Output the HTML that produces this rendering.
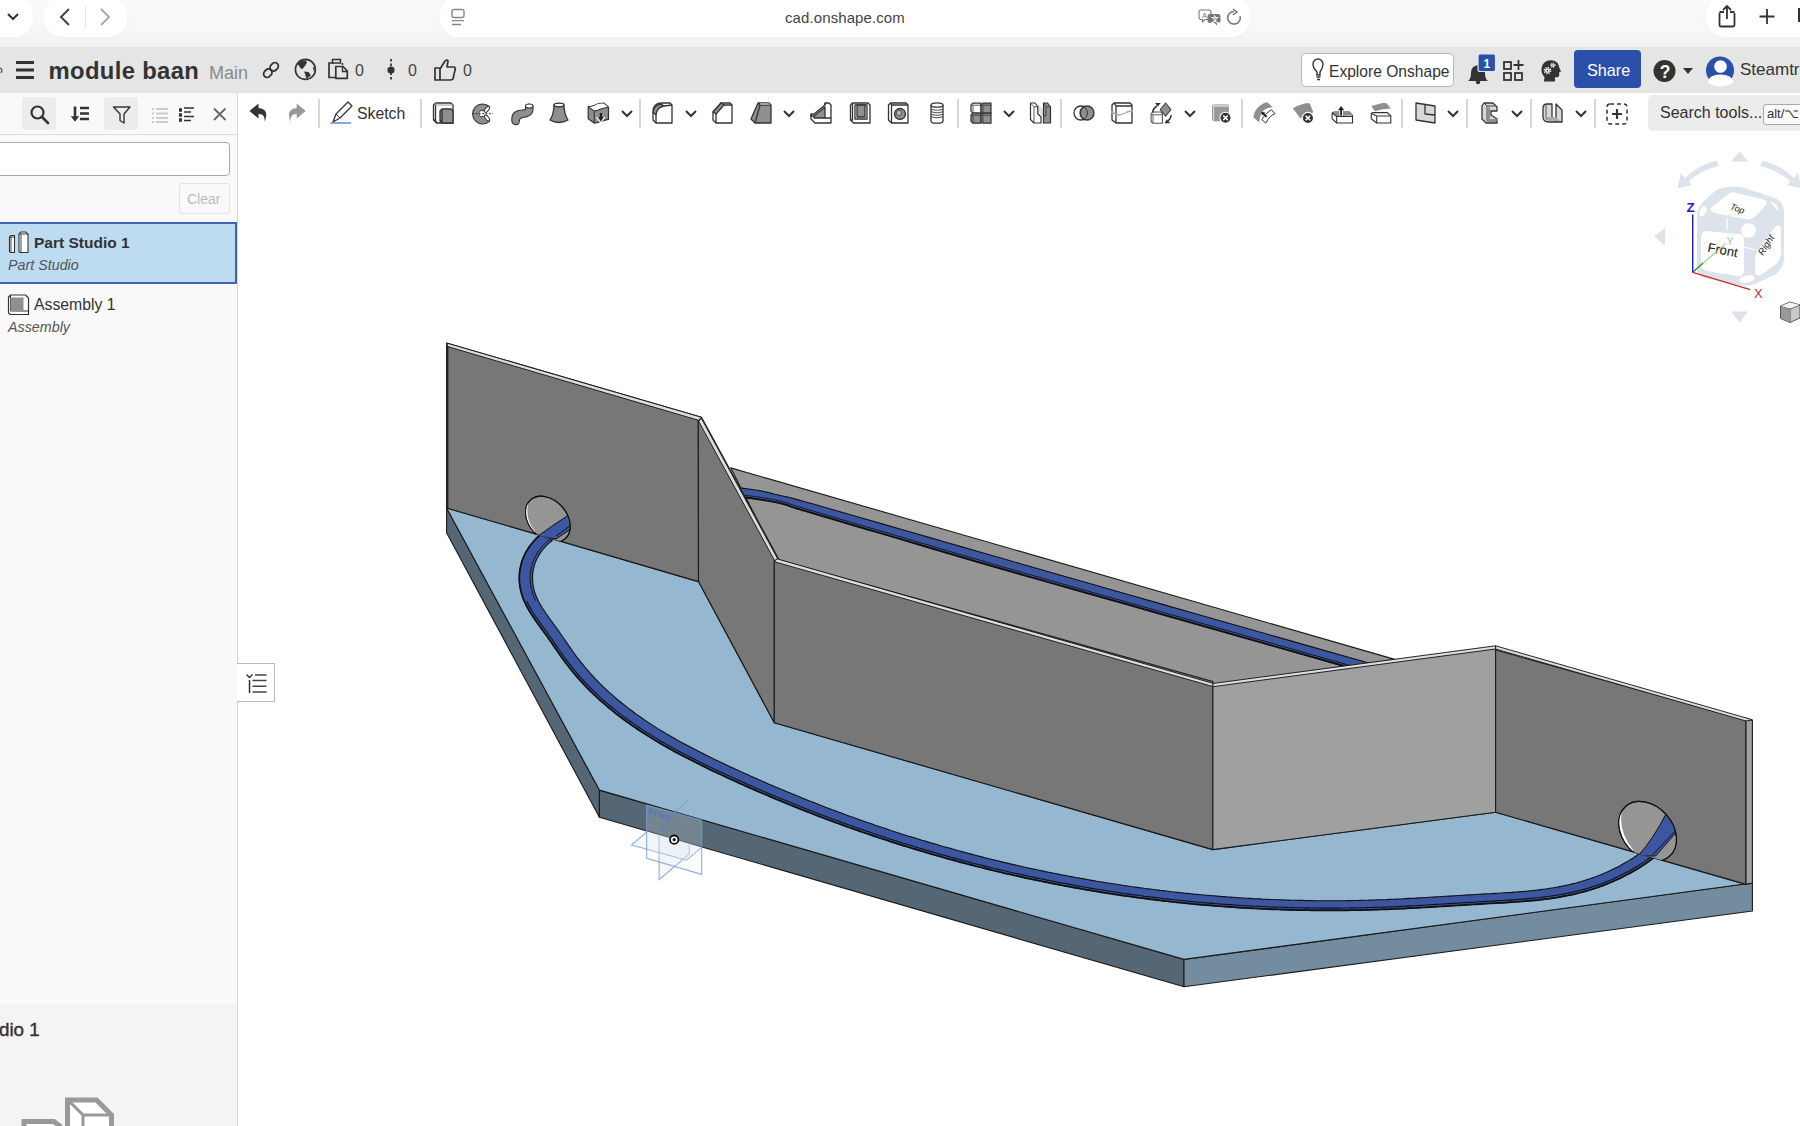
<!DOCTYPE html>
<html><head><meta charset="utf-8">
<style>
*{box-sizing:border-box;margin:0;padding:0}
html,body{width:1800px;height:1126px;overflow:hidden;background:#fff;font-family:"Liberation Sans",sans-serif;color:#333}
.abs{position:absolute}
#browser{left:0;top:0;width:1800px;height:47px;background:linear-gradient(#fafafa,#f8f8f8 60%,#f2f2f2)}
.pill{position:absolute;background:#fff;border-radius:19px;box-shadow:0 0 10px rgba(0,0,0,0.025)}
#hdr{left:0;top:47px;width:1800px;height:46px;background:#e5e5e5}
#tb{left:0;top:93px;width:1800px;height:42px;background:#fff}
#lp{left:0;top:93px;width:238px;height:1033px;background:#f9f9f9;border-right:1px solid #d6d6d6}
.sep{position:absolute;top:99px;width:2px;height:29px;background:#d6d6d6}
svg{position:absolute;overflow:visible}
</style></head><body>

<!-- browser chrome -->
<div id="browser" class="abs">
  <div class="pill" style="left:-20px;top:-4px;width:53px;height:41px"></div>
  <div class="pill" style="left:44px;top:-4px;width:83px;height:41px"></div>
  <div class="pill" style="left:440px;top:-4px;width:810px;height:41px"></div>
  <div class="pill" style="left:1706px;top:-4px;width:120px;height:41px"></div>
  <div class="abs" style="left:85px;top:6px;width:1px;height:22px;background:#e3e3e3"></div>
  <div class="abs" style="left:785px;top:9px;font-size:15px;color:#444;letter-spacing:0.1px">cad.onshape.com</div>
  <svg style="left:0;top:0" width="1800" height="47">
    <path d="M8,14 L13,19 L18,14" fill="none" stroke="#333" stroke-width="2"/>
    <path d="M69,9 L61,17 L69,25" fill="none" stroke="#444" stroke-width="2"/>
    <path d="M101,9 L109,17 L101,25" fill="none" stroke="#aaa" stroke-width="2"/>
    <rect x="452" y="9.5" width="12" height="8" rx="2" fill="none" stroke="#888" stroke-width="1.4"/>
    <path d="M452,20.6 H464 M452,24.5 H461" stroke="#888" stroke-width="1.4"/>
    <path d="M1201,10 H1209 Q1211,10 1211,12 V17 Q1211,19.5 1209,19.5 H1205 L1202.5,22 V19.5 H1201 Q1199,19.5 1199,17 V12 Q1199,10 1201,10 Z" fill="#fff" stroke="#777" stroke-width="1.1"/>
    <text x="1202" y="17.5" font-size="7.5" fill="#777" font-family="Liberation Sans">A</text>
    <path d="M1210,14 H1218 Q1220.5,14 1220.5,16.5 V20.5 Q1220.5,23 1218,23 H1217 V25.5 L1214.5,23 H1210 Q1207.5,23 1207.5,20.5 V16.5 Q1207.5,14 1210,14 Z" fill="#777"/>
    <text x="1210.5" y="21.5" font-size="7.5" fill="#fff" font-family="Liberation Sans" font-weight="bold">&#25991;</text>
    <path d="M1240,16 A6.3,6.3 0 1 1 1234,11.5" fill="none" stroke="#777" stroke-width="1.5"/>
    <path d="M1233,9 L1237,12 L1233,15" fill="none" stroke="#777" stroke-width="1.5"/>
    <path d="M1719.5,13 V25 Q1719.5,26.5 1721,26.5 H1733 Q1734.5,26.5 1734.5,25 V13 M1724,12 H1719.5 M1734.5,12 H1730" fill="none" stroke="#333" stroke-width="1.8"/>
    <path d="M1727,19 V6.5 M1723,10 L1727,6 L1731,10" fill="none" stroke="#333" stroke-width="1.8"/>
    <path d="M1767,9 V24 M1759.5,16.5 H1774.5" stroke="#333" stroke-width="1.8"/>
    <path d="M1799,8 V22" stroke="#333" stroke-width="2"/>
  </svg>
</div>

<!-- onshape header -->
<div id="hdr" class="abs">
  <svg style="left:0;top:0" width="1800" height="46">
    <path d="M16,15.5 H34 M16,23 H34 M16,30.5 H34" stroke="#333" stroke-width="3"/>
    <path d="M0,21 Q3,22 1,26" fill="none" stroke="#666" stroke-width="1.5"/>
  </svg>
  <div class="abs" style="left:48.5px;top:10px;font-size:23.8px;font-weight:bold;color:#333;letter-spacing:0.35px">module baan</div>
  <div class="abs" style="left:209px;top:15.5px;font-size:18px;color:#8a8a8a">Main</div>
  <div class="abs" style="left:355px;top:15px;font-size:16px;color:#444">0</div>
  <div class="abs" style="left:408px;top:15px;font-size:16px;color:#444">0</div>
  <div class="abs" style="left:463px;top:15px;font-size:16px;color:#444">0</div>
  <div class="abs" style="left:1301px;top:6px;width:153px;height:34px;background:#fff;border:1px solid #b9b9b9;border-radius:5px"></div>
  <div class="abs" style="left:1329px;top:15.5px;font-size:15.6px;color:#333">Explore Onshape</div>
  <div class="abs" style="left:1574px;top:3px;width:67px;height:38px;background:#2b50aa;border-radius:4px"></div>
  <div class="abs" style="left:1587px;top:13.5px;font-size:16.2px;color:#fff">Share</div>
  <div class="abs" style="left:1740px;top:13px;font-size:17px;color:#333">Steamtra</div>
</div>

<!-- toolbar -->
<div id="tb" class="abs"></div>
<div id="lp" class="abs"></div>

<!-- header icons -->
<svg style="left:0;top:47px" width="1800" height="46">
  <!-- link -->
  <g transform="translate(271,23) rotate(-45)" fill="none" stroke="#333" stroke-width="1.8">
    <rect x="-9" y="-3.5" width="9" height="7" rx="3.5"/><rect x="0" y="-3.5" width="9" height="7" rx="3.5"/>
  </g>
  <!-- globe -->
  <circle cx="305.4" cy="22.4" r="10" fill="none" stroke="#333" stroke-width="1.6"/>
  <path d="M298,15.5 Q302,13 306.5,13.5 Q307.5,16 305.4,18.3 L302.5,22 Q300,21.5 299.5,19.5 Q297.5,18 298,15.5 Z" fill="#333"/>
  <path d="M304,24.5 L308.5,25 L311,28.2 L306.8,31.8 Q305.2,29 305.2,27.3 Z" fill="#333"/>
  <path d="M312.8,19.5 L315,21.5 L313.8,24.5 Z" fill="#333"/>
  <!-- clipboard -->
  <path d="M333.5,16 H329 V30.5 H335" fill="none" stroke="#333" stroke-width="1.7"/>
  <rect x="332.5" y="12.5" width="8" height="3.5" fill="none" stroke="#333" stroke-width="1.5"/>
  <path d="M342.5,16 V18" stroke="#333" stroke-width="1.5"/>
  <path d="M335.8,19.5 H343 L347.3,24 V31.3 H335.8 Z" fill="none" stroke="#333" stroke-width="1.7" stroke-linejoin="round"/>
  <path d="M342.5,19.5 V24.5 H347.3" fill="none" stroke="#333" stroke-width="1.3"/>
  <!-- version pin -->
  <path d="M391,12 V34" stroke="#333" stroke-width="1.8" stroke-dasharray="2.5,2"/>
  <circle cx="391" cy="23" r="3.6" fill="#333"/>
  <!-- thumbs up -->
  <path d="M435,21 H440 V33 H435 Z M440,22 L445,14 Q447,12 448,14 L447,20 H454 Q456,21 455,23 L453,32 Q452,33 450,33 H440" fill="none" stroke="#333" stroke-width="1.7" stroke-linejoin="round"/>
  <!-- lightbulb -->
  <path d="M1317,25 Q1313,21 1313,17 A5,5 0 0 1 1323,17 Q1323,21 1320,25 V28 H1317 Z" fill="none" stroke="#333" stroke-width="1.4"/>
  <path d="M1316.5,30 H1320.5 M1317,32.5 H1320" stroke="#333" stroke-width="1.4"/>
  <!-- bell -->
  <path d="M1468,34 Q1471,32 1471,26 Q1471,19 1478,18 Q1485,19 1485,26 Q1485,32 1488,34 Z" fill="#333"/>
  <circle cx="1478" cy="35" r="2.2" fill="#333"/>
  <rect x="1478" y="7" width="17.5" height="17.5" rx="2" fill="#2b50aa" stroke="#e5e5e5" stroke-width="1.2"/>
  <text x="1486.8" y="20.5" font-size="12" font-weight="bold" fill="#fff" text-anchor="middle" font-family="Liberation Sans">1</text>
  <!-- grid plus -->
  <rect x="1504" y="15" width="7" height="7" fill="none" stroke="#333" stroke-width="1.8"/>
  <rect x="1504" y="26" width="7" height="7" fill="none" stroke="#333" stroke-width="1.8"/>
  <rect x="1515" y="26" width="7" height="7" fill="none" stroke="#333" stroke-width="1.8"/>
  <path d="M1518.5,13 V23 M1513.5,18 H1523.5" stroke="#333" stroke-width="1.8"/>
  <!-- head with gears -->
  <path d="M1544,34.5 L1544.5,30 Q1541,27 1541.5,21.5 Q1542.5,13.5 1551,13.3 Q1558.5,13.5 1559.3,20.5 L1561,24.5 L1559.2,25.3 V28.5 Q1559,30.5 1556.5,30.3 L1555,30.3 V34.5 Z" fill="#333"/>
  <circle cx="1547.5" cy="23.6" r="2.4" fill="#fff"/>
  <circle cx="1547.5" cy="23.6" r="3.2" fill="none" stroke="#fff" stroke-width="1.3" stroke-dasharray="1.3,1.2"/>
  <circle cx="1547.5" cy="23.6" r="0.9" fill="#333"/>
  <circle cx="1552.8" cy="18.2" r="1.7" fill="#fff"/>
  <circle cx="1552.8" cy="18.2" r="2.3" fill="none" stroke="#fff" stroke-width="1" stroke-dasharray="1,1"/>
  <circle cx="1552.8" cy="18.2" r="0.6" fill="#333"/>
  <!-- help -->
  <circle cx="1664.5" cy="24" r="11" fill="#333"/>
  <text x="1665" y="30.5" font-size="17.5" font-weight="bold" fill="#fff" text-anchor="middle" font-family="Liberation Sans">?</text>
  <path d="M1683,21 H1693 L1688,27 Z" fill="#333"/>
  <!-- avatar -->
  <circle cx="1720" cy="23.5" r="14" fill="#2b50aa"/>
  <circle cx="1720.5" cy="19.5" r="6.3" fill="#fff"/>
  <path d="M1707.5,35.5 Q1709,27.5 1720.5,27.5 Q1732,27.5 1733.5,35.5 Q1727,39.5 1720.5,39.5 Q1714,39.5 1707.5,35.5Z" fill="#fff"/>
</svg>

<!-- toolbar left -->
<svg style="left:0;top:93px" width="420" height="42">
  <path d="M258.5,10.5 L249.5,18 L258.5,25.5 V21 Q265.5,20.5 264.5,29 Q270,16 258.5,15 Z" fill="#333"/>
  <path d="M296.7,10.5 L305.7,18 L296.7,25.5 V21 Q289.7,20.5 290.7,29 Q285.2,16 296.7,15 Z" fill="#999"/>
  <path d="M333,29 L336,21 L348,9 L352,13 L340,25 Z" fill="none" stroke="#333" stroke-width="1.3" stroke-linejoin="round"/>
  <path d="M336,21 L340,25" stroke="#333" stroke-width="1"/>
  <path d="M330.5,30 H351" stroke="#6a8fd8" stroke-width="1.6"/>
</svg>
<div class="abs" style="left:357px;top:104.5px;font-size:15.8px;color:#333">Sketch</div>

<!-- search tools -->
<div class="abs" style="left:1648px;top:95px;width:170px;height:36px;background:#ececec;border-radius:5px"></div>
<div class="abs" style="left:1660px;top:104px;font-size:16px;color:#333">Search tools...</div>
<div class="abs" style="left:1763px;top:104px;width:50px;height:21px;background:#fafafa;border:1px solid #aaa;border-radius:3px"></div>
<div class="abs" style="left:1767px;top:106px;font-size:13px;color:#333">alt/&#8997;</div>

<!-- left panel contents -->
<div class="abs" style="left:22px;top:97px;width:34px;height:33px;background:#ececec;border-radius:3px"></div>
<div class="abs" style="left:104px;top:97px;width:34px;height:33px;background:#ececec;border-radius:3px"></div>
<div class="abs" style="left:0;top:133.5px;width:238px;height:1px;background:#dcdcdc"></div>
<svg style="left:0;top:93px" width="238" height="42">
  <circle cx="37.5" cy="19.5" r="6" fill="none" stroke="#333" stroke-width="2.2"/>
  <path d="M42,24 L48,30" stroke="#333" stroke-width="2.6" stroke-linecap="round"/>
  <path d="M75,13.5 V24" stroke="#333" stroke-width="2.6"/><path d="M70.8,23.3 H79.2 L75,28.8 Z" fill="#333"/>
  <path d="M80,15 H89 M80,20.5 H89 M80,26 H89" stroke="#333" stroke-width="2.4"/>
  <path d="M113.5,14 H130 L124,21 V30 L120,27.5 V21 Z" fill="none" stroke="#333" stroke-width="1.4" stroke-linejoin="round"/>
  <path d="M152,16 H154 M152,20.5 H154 M152,25 H154 M152,29 H154 M156,16 H168 M156,20.5 H168 M156,25 H168 M156,29 H168" stroke="#ccc" stroke-width="1.8"/>
  <path d="M179,17 H182 M179,22 H182 M179,27 H182" stroke="#333" stroke-width="3.4"/>
  <path d="M184,15 H194 M184,19 H191 M184,23.5 H194 M184,27.5 H191" stroke="#333" stroke-width="1.3"/>
  <path d="M214,15.5 L225.5,27 M225.5,15.5 L214,27" stroke="#666" stroke-width="1.8"/>
</svg>
<div class="abs" style="left:-4px;top:142px;width:234px;height:34px;background:#fff;border:1px solid #aaa;border-radius:4px"></div>
<div class="abs" style="left:179px;top:183px;width:51px;height:31px;background:#f9f9f9;border:1px solid #e3e3e3;border-radius:3px"></div>
<div class="abs" style="left:187px;top:191px;font-size:14px;color:#bbb">Clear</div>
<div class="abs" style="left:-2px;top:222px;width:239px;height:62px;background:#bddcf1;border:2px solid #3f65b5"></div>
<svg style="left:0;top:222px" width="238" height="120">
  <path d="M9.5,15 L11,13.5 H14.5 V30.5 H10.5 L9.5,29.5 Z" fill="#fff" stroke="#333" stroke-width="1.1"/>
  <path d="M9.5,15 H14.5 M11,15 V30.5" fill="none" stroke="#333" stroke-width="0.9"/>
  <path d="M19,12 L21,10 H25.5 L28,12 V30.5 H20 L19,29.5 Z" fill="#fff" stroke="#333" stroke-width="1.1"/>
  <path d="M19,12 H25.5 L28,12 M21,12 V30.5" fill="none" stroke="#333" stroke-width="0.9"/>
  <path d="M8.5,75 L10.5,73 H25.5 L28.5,76 V92.5 H10 L8.5,91 Z" fill="#fff" stroke="#333" stroke-width="1.2"/>
  <path d="M10.5,73 V89 H28.5" fill="none" stroke="#333" stroke-width="1"/>
  <rect x="10.5" y="75.5" width="13" height="13" fill="#8f8f8f"/>
</svg>
<div class="abs" style="left:34px;top:234px;font-size:15.5px;font-weight:bold;color:#333">Part Studio 1</div>
<div class="abs" style="left:8px;top:257px;font-size:14.3px;font-style:italic;color:#555">Part Studio</div>
<div class="abs" style="left:34px;top:296px;font-size:15.8px;color:#333">Assembly 1</div>
<div class="abs" style="left:8px;top:319px;font-size:14.3px;font-style:italic;color:#555">Assembly</div>

<div class="abs" style="left:0;top:1004px;width:237px;height:122px;background:#f4f4f4"></div>
<div class="abs" style="left:-1px;top:1019px;font-size:18.8px;color:#333;-webkit-text-stroke:0.4px #333">dio 1</div>
<svg style="left:0;top:1090px" width="237" height="36">
  <path d="M67.5,37 V10 H96.5 L111.5,25 V37" fill="#fff" stroke="#999" stroke-width="5"/>
  <path d="M69,11 L83,25 H110 M83,25 V37" fill="none" stroke="#999" stroke-width="3"/>
  <path d="M24,37 V31.5 H54 L61,37" fill="#fff" stroke="#999" stroke-width="5"/>
</svg>


<!-- view cube -->
<svg style="left:1640px;top:140px" width="160" height="190" viewBox="1640 140 160 190">
  <g fill="#dde3ea">
    <path d="M1739.5,151.5 L1731,161.5 H1748 Z"/>
    <path d="M1731,311.5 H1748 L1739.5,322.5 Z"/>
    <path d="M1654,236.5 L1665,228 V245.5 Z"/>
    <path d="M1716.5,160.5 Q1698,165 1685,178 L1681,173 L1677.5,188.5 L1692,185 L1688.5,181.5 Q1701,170 1718.5,166 Z"/>
    <path d="M1762.5,160.5 Q1781,165 1794,178 L1798,173 L1801.5,188.5 L1787,185 L1790.5,181.5 Q1778,170 1760.5,166 Z"/>
    <path d="M1716,190 Q1730,184 1745,188 L1775,198 Q1784,202 1784,212 V260 Q1783,268 1776,274 L1755,284 Q1748,287 1740,285 L1705,278 Q1697,276 1697,267 V216 Q1697,208 1704,201 Z"/>
  </g>
  <g fill="#fff">
    <path d="M1712,207 Q1708,210 1715,213 L1745,219 Q1752,220 1757,215 L1766,205 Q1769,201 1762,199 L1737,193 Q1731,191 1727,195 Z"/>
    <path d="M1706,231 Q1701,232 1701,238 V264 Q1701,269 1707,271 L1737,276 Q1744,277 1744,270 V240 Q1744,234 1738,234 Z"/>
    <path d="M1757,251 Q1755,255 1755,262 V272 Q1756,277 1761,275 L1775,265 Q1781,260 1781,253 V231 Q1781,222 1775,227 Z"/>
    <circle cx="1748.5" cy="230.5" r="7.3"/>
    <ellipse cx="1703" cy="211.5" rx="3" ry="5.5" transform="rotate(25 1703 211.5)"/>
    <ellipse cx="1747" cy="279" rx="8" ry="3.5" transform="rotate(-12 1747 279)"/>
    <path d="M1770,201 L1779,212 L1777,205 Z"/>
  </g>
  <path d="M1727,218 V230 M1744,247 L1756,250" stroke="#fff" stroke-width="1.2"/>
  <text x="0" y="0" font-family="Liberation Sans" font-size="9" font-style="italic" fill="#222" transform="translate(1729.5,209) rotate(20)">Top</text>
  <text x="0" y="0" font-family="Liberation Sans" font-size="13" fill="#111" transform="translate(1707,251.5) rotate(11)">Front</text>
  <text x="0" y="0" font-family="Liberation Sans" font-size="9.5" font-style="italic" fill="#222" transform="translate(1763,256) rotate(-58)">Right</text>
  <path d="M1692.7,272.3 L1725.6,243.6" stroke="#9bd08f" stroke-width="1.2"/>
  <path d="M1692.7,272.3 L1703,263" stroke="#3a9a32" stroke-width="1.4"/>
  <path d="M1692.7,272.5 V214.5" stroke="#1a1acc" stroke-width="1.4"/>
  <path d="M1692.7,272.3 L1750.2,289.6" stroke="#cc2a2a" stroke-width="1.4"/>
  <text x="1686.5" y="211.5" font-family="Liberation Sans" font-size="13.5" font-weight="bold" fill="#1a1acc">Z</text>
  <text x="1754" y="297.5" font-family="Liberation Sans" font-size="13" fill="#cc2a2a">X</text>
  <text x="1726.5" y="244.5" font-family="Liberation Sans" font-size="10.5" fill="#9bd08f">Y</text>
  <!-- small cube -->
  <path d="M1780.5,306 L1790,302 L1800,305 V318 L1790,322.5 L1780.5,318.5 Z" fill="#c9c9c9" stroke="#444" stroke-width="0.9"/>
  <path d="M1780.5,306 L1790,309 L1800,305 M1790,309 V322.5" fill="none" stroke="#444" stroke-width="0.9"/>
  <path d="M1781,306.5 L1790,309.5 V322 L1781,318Z" fill="#999"/>
  <path d="M1781,306 L1790,302.5 L1799.5,305 L1790,308.5Z" fill="#f2f2f2"/>
</svg>

<!-- sidebar toggle -->
<div class="abs" style="left:237px;top:663px;width:38px;height:39px;background:#fff;border:1px solid #bbb;border-left:none"></div>
<svg style="left:237px;top:663px" width="38" height="39">
  <path d="M9.5,11.5 L12.5,14.5 L15.5,11.5" fill="none" stroke="#333" stroke-width="1.4"/>
  <path d="M12.5,17 V30" stroke="#333" stroke-width="1.5"/>
  <path d="M18,12 H29.5 M15.5,17.5 H29.5 M15.5,23.2 H29.5 M15.5,29 H29.5" stroke="#444" stroke-width="1.4"/>
</svg>
<svg style="left:432px;top:102px" width="22" height="22" viewBox="0 0 22 22"><path d="M1.5,3 L3.5,1 L19,1 L21,3 L21,21 L4.5,21 L1.5,18 Z" fill="#fff" stroke="#333" stroke-width="1.3" stroke-linejoin="round"/><path d="M3.5,1 L3.5,18 L1.5,18 M3.5,18 L4.5,21" fill="none" stroke="#333" stroke-width="1.3" stroke-linejoin="round"/><path d="M3.5,1 L3.5,3 L19,3 L21,3" fill="none" stroke="#999" stroke-width="1"/><path d="M8,9 L10,7 L19,7 L21,9 L21,21 L10,21 L8,19 Z" fill="#8f8f8f" stroke="#333" stroke-width="1.3" stroke-linejoin="round"/><path d="M10,7 L10,19 L8,19 M10,19 L10,21" fill="none" stroke="#333" stroke-width="1.3" stroke-linejoin="round"/></svg>
<svg style="left:471px;top:102px" width="22" height="22" viewBox="0 0 22 22"><path d="M18.4,4.6 A10,10 0 1 0 18.4,19.3 L13.6,13.2 A3,3 0 1 1 13.6,10 Z" fill="#8f8f8f" stroke="#333" stroke-width="1.1" stroke-linejoin="round"/><ellipse cx="16" cy="7.3" rx="3.6" ry="1.7" transform="rotate(-52 16 7.3)" fill="#fff" stroke="#333" stroke-width="1"/><ellipse cx="16" cy="16" rx="3.6" ry="1.7" transform="rotate(52 16 16)" fill="#fff" stroke="#333" stroke-width="1"/><circle cx="11" cy="11.6" r="2.6" fill="#fff"/><path d="M1,11.6 H22" stroke="#333" stroke-width="1" stroke-dasharray="1.8,1.6"/></svg>
<svg style="left:510px;top:102px" width="22" height="22" viewBox="0 0 22 22"><path d="M2,20 Q1,13 5,10 Q8,8 12,8 L15.5,7.6 V4 A3.8,2 0 0 1 23,4 V8 Q22.5,13 17,14.6 L12,15.8 Q9.2,16.5 9.3,19.5 Q9,22.8 5.5,22.6 Q2.5,22.3 2,20 Z" fill="#8f8f8f" stroke="#333" stroke-width="1.1" stroke-linejoin="round"/><ellipse cx="19.25" cy="4" rx="3.75" ry="2" fill="#fff" stroke="#333" stroke-width="1.1"/></svg>
<svg style="left:548px;top:102px" width="22" height="22" viewBox="0 0 22 22"><path d="M6,3 Q11,1 16,3 Q16,12 20,18 Q11,23 2,18 Q6,12 6,3 Z" fill="#8f8f8f" stroke="#333" stroke-width="1.3" stroke-linejoin="round"/><ellipse cx="11" cy="3" rx="5" ry="1.8" fill="#fff" stroke="#333" stroke-width="1.3" stroke-linejoin="round"/></svg>
<svg style="left:587px;top:102px" width="22" height="22" viewBox="0 0 22 22"><path d="M1.2,4.6 Q4,4.5 7.2,3.6 Q9,2.2 11.8,1.5 L17,1.2 L21.5,5.2 V17.4 Q18,18 14.8,19.2 Q11,20.5 7.2,21.1 L1.2,16.8 Z" fill="#8f8f8f" stroke="#333" stroke-width="1.2" stroke-linejoin="round"/><path d="M1.6,4.9 Q4,4.7 7.2,3.9 Q9,2.5 11.8,1.8 L16.8,1.5 L21,5.3 Q19,5.6 16.3,6.2 Q13,7.1 10.8,8.3 L7.2,9.1 Z" fill="#fff"/><path d="M1.2,4.6 L7.2,9.1 L10.8,8.3 Q13,7.1 16.3,6.2 L21.5,5.2 M7.2,9.1 V21.1" fill="none" stroke="#333" stroke-width="1.1"/><path d="M9.3,15 L13.8,20.8 L17.9,15" fill="none" stroke="#fff" stroke-width="1.1"/><path d="M13.9,11 V16" stroke="#222" stroke-width="2.2"/><path d="M11.4,15 H16.4 L13.9,19.2 Z" fill="#222"/></svg>
<svg style="left:616px;top:102px" width="22" height="22" viewBox="0 0 22 22"><path d="M6,9 L11,14 L16,9" fill="none" stroke="#333" stroke-width="2"/></svg>
<svg style="left:651px;top:102px" width="22" height="22" viewBox="0 0 22 22"><path d="M2,10 Q2,1 11,1 L19,1 L21,3 L21,21 L5,21 L2,18 Z" fill="#fff" stroke="#333" stroke-width="1.3" stroke-linejoin="round"/><path d="M2,10 Q3,3 10,2 L13,4 Q6,5 5,13 Z" fill="#8f8f8f" stroke="#333" stroke-width="1.3" stroke-linejoin="round"/><path d="M5,13 L5,21 M13,4 L21,3" fill="none" stroke="#333" stroke-width="1.3" stroke-linejoin="round"/></svg>
<svg style="left:680px;top:102px" width="22" height="22" viewBox="0 0 22 22"><path d="M6,9 L11,14 L16,9" fill="none" stroke="#333" stroke-width="2"/></svg>
<svg style="left:711px;top:102px" width="22" height="22" viewBox="0 0 22 22"><path d="M2,10 L10,1 L19,1 L21,3 L21,21 L5,21 L2,18 Z" fill="#fff" stroke="#333" stroke-width="1.3" stroke-linejoin="round"/><path d="M2,10 L10,1 L13,3 L5,12 Z" fill="#8f8f8f" stroke="#333" stroke-width="1.3" stroke-linejoin="round"/><path d="M5,12 L5,21 M13,3 L21,3" fill="none" stroke="#333" stroke-width="1.3" stroke-linejoin="round"/></svg>
<svg style="left:750px;top:102px" width="22" height="22" viewBox="0 0 22 22"><path d="M1,17 L8,1 L19,1 L21,3 L21,21 L5,21 Z" fill="#8f8f8f" stroke="#333" stroke-width="1.3" stroke-linejoin="round"/><path d="M10,3 L21,3 M10,3 L5,21 M8,1 L10,3" fill="none" stroke="#333" stroke-width="1.3" stroke-linejoin="round"/><path d="M10,1.5 L19,1.5 L20,2.5 L10.5,2.5Z" fill="#fff"/></svg>
<svg style="left:778px;top:102px" width="22" height="22" viewBox="0 0 22 22"><path d="M6,9 L11,14 L16,9" fill="none" stroke="#333" stroke-width="2"/></svg>
<svg style="left:810px;top:102px" width="22" height="22" viewBox="0 0 22 22"><path d="M1,12 L4,12 L15,3 L15,1 L19,1 L21,3 L21,21 L5,21 L1,17 Z" fill="#fff" stroke="#333" stroke-width="1.3" stroke-linejoin="round"/><path d="M4,14 L15,5 L15,16 L4,16 Z" fill="#8f8f8f" stroke="#333" stroke-width="1.3" stroke-linejoin="round"/><path d="M15,1 L15,3 M1,12 L1,14 L4,14 M15,16 L21,16" fill="none" stroke="#333" stroke-width="1.3" stroke-linejoin="round"/></svg>
<svg style="left:849px;top:102px" width="22" height="22" viewBox="0 0 22 22"><path d="M1.5,3 L3.5,1 L19,1 L21,3 L21,21 L4.5,21 L1.5,18 Z" fill="#fff" stroke="#333" stroke-width="1.3" stroke-linejoin="round"/><path d="M3.5,1 L3.5,18 L1.5,18" fill="none" stroke="#333" stroke-width="1.3" stroke-linejoin="round"/><path d="M6,3 L18,3 L18,17 L6,17 Z" fill="#fff" stroke="#333" stroke-width="1.3" stroke-linejoin="round"/><path d="M8,3 L16,3 L16,15 L8,15 Z" fill="#8f8f8f" stroke="#333" stroke-width="1.3" stroke-linejoin="round"/></svg>
<svg style="left:887px;top:102px" width="22" height="22" viewBox="0 0 22 22"><path d="M1.5,3 L3.5,1 L19,1 L21,3 L21,21 L4.5,21 L1.5,18 Z" fill="#fff" stroke="#333" stroke-width="1.3" stroke-linejoin="round"/><path d="M3.5,1 L4.5,3 L21,3 M4.5,3 L4.5,21" fill="none" stroke="#333" stroke-width="1.3" stroke-linejoin="round"/><circle cx="13" cy="12" r="5.5" fill="#8f8f8f" stroke="#333" stroke-width="1.3" stroke-linejoin="round"/><circle cx="12" cy="11" r="2.6" fill="#bdbdbd" stroke="#555" stroke-width="1"/></svg>
<svg style="left:926px;top:102px" width="22" height="22" viewBox="0 0 22 22"><path d="M5,3 L5,19 A6,2.2 0 0 0 17,19 L17,3" fill="#fff" stroke="#333" stroke-width="1.3" stroke-linejoin="round"/><ellipse cx="11" cy="3" rx="6" ry="2.2" fill="#fff" stroke="#333" stroke-width="1.3" stroke-linejoin="round"/><path d="M5,7 Q11,9.5 17,7 M5,9.5 Q11,12 17,9.5 M5,12 Q11,14.5 17,12 M5,14.5 Q11,17 17,14.5" fill="none" stroke="#555" stroke-width="1.2"/></svg>
<svg style="left:970px;top:102px" width="22" height="22" viewBox="0 0 22 22"><path d="M1,3.0 L2.8,1.2 H11 V11.2 H2.8 L1,9.399999999999999 Z" fill="#fff" stroke="#333" stroke-width="1.2" stroke-linejoin="round"/><path d="M1.3,3.2 H10.8 M3,3.2 V11.0" fill="none" stroke="#333" stroke-width="0.8"/><path d="M11,3.0 L12.8,1.2 H21 V11.2 H12.8 L11,9.399999999999999 Z" fill="#8f8f8f" stroke="#333" stroke-width="1.2" stroke-linejoin="round"/><path d="M11.3,3.2 H20.8 M13,3.2 V11.0" fill="none" stroke="#333" stroke-width="0.8"/><path d="M1,13.0 L2.8,11.2 H11 V21.2 H2.8 L1,19.4 Z" fill="#8f8f8f" stroke="#333" stroke-width="1.2" stroke-linejoin="round"/><path d="M1.3,13.2 H10.8 M3,13.2 V21.0" fill="none" stroke="#333" stroke-width="0.8"/><path d="M11,13.0 L12.8,11.2 H21 V21.2 H12.8 L11,19.4 Z" fill="#8f8f8f" stroke="#333" stroke-width="1.2" stroke-linejoin="round"/><path d="M11.3,13.2 H20.8 M13,13.2 V21.0" fill="none" stroke="#333" stroke-width="0.8"/></svg>
<svg style="left:998px;top:102px" width="22" height="22" viewBox="0 0 22 22"><path d="M6,9 L11,14 L16,9" fill="none" stroke="#333" stroke-width="2"/></svg>
<svg style="left:1030px;top:102px" width="22" height="22" viewBox="0 0 22 22"><path d="M8,1.5 L13,8 V15 L8,9Z" fill="#ddd"/><path d="M0.5,1 H5 L7.75,4.75 V11.5 L11,15 V21 H4 L0.5,17.5 Z" fill="#fff" stroke="#333" stroke-width="1.2" stroke-linejoin="round"/><path d="M0.7,1.2 L4,4.75 H7.5 M4,4.75 V20.8" fill="none" stroke="#333" stroke-width="0.8"/><path d="M13.5,1 H17.5 L20.5,4.75 V21 H13.5 Z" fill="#8f8f8f" stroke="#333" stroke-width="1.2" stroke-linejoin="round"/><path d="M13.7,1.2 L16,4.75 H20.3 M16,4.75 V14 H13.7" fill="none" stroke="#333" stroke-width="0.8"/></svg>
<svg style="left:1073px;top:102px" width="22" height="22" viewBox="0 0 22 22"><circle cx="8" cy="11" r="7" fill="#fff" stroke="#333" stroke-width="1.3" stroke-linejoin="round"/><circle cx="14" cy="11" r="7" fill="#8f8f8f" stroke="#333" stroke-width="1.3" stroke-linejoin="round"/><path d="M11,5 A7,7 0 0 1 11,17 A7,7 0 0 1 11,5Z" fill="#8f8f8f" stroke="#333" stroke-width="1"/></svg>
<svg style="left:1111px;top:102px" width="22" height="22" viewBox="0 0 22 22"><path d="M1,3 L3,1 L19,1 L21,3 L21,21 L5,21 L1,18 Z" fill="#fff" stroke="#333" stroke-width="1.3" stroke-linejoin="round"/><path d="M3,1 L5,4 L21,4 M5,4 L5,21" fill="none" stroke="#333" stroke-width="1.3" stroke-linejoin="round"/><path d="M0,10 Q4,12 8,13 Q13,12 16,10 Q19,9 22,9" fill="none" stroke="#aaa" stroke-width="1.4"/></svg>
<svg style="left:1150px;top:102px" width="22" height="22" viewBox="0 0 22 22"><path d="M1.1,12 L2.5,10 H11 L12.4,11.5 V21.3 H3 L1.1,19.5 Z" fill="#fff" stroke="#555" stroke-width="1.1" stroke-linejoin="round"/><path d="M1.4,11.9 L3,12.8 H12.2 M3,12.8 V21" fill="none" stroke="#555" stroke-width="0.9"/><path d="M15.6,1 L20.9,7.6 L15.6,14.2 L10.3,7.6 Z" fill="#8f8f8f" stroke="#444" stroke-width="1.1" stroke-linejoin="round"/><path d="M2.6,10.6 Q3,6.5 6.9,4" fill="none" stroke="#333" stroke-width="1.5"/><path d="M5,1 H10.8 L7.8,4.6 Z" fill="#333"/><path d="M21.2,13 Q21,16.5 18,18.9" fill="none" stroke="#333" stroke-width="1.5"/><path d="M14.5,21.3 H20.3 L16.8,17.2 Z" fill="#333"/></svg>
<svg style="left:1179px;top:102px" width="22" height="22" viewBox="0 0 22 22"><path d="M6,9 L11,14 L16,9" fill="none" stroke="#333" stroke-width="2"/></svg>
<svg style="left:1211px;top:102px" width="22" height="22" viewBox="0 0 22 22"><path d="M1,3.5 L2.6,2.1 H16.6 L17.9,3.5 V19.2 H2.4 L1,17.8 Z" fill="#999"/><path d="M1,3.5 L2.6,2.1 H16.6 L17.9,3.5 V5 H3 Z" fill="#c8c8c8"/><path d="M2.6,3.5 V18.5" stroke="#ddd" stroke-width="1"/><circle cx="14.5" cy="15.8" r="5.6" fill="#333" stroke="#fff" stroke-width="1.1"/><path d="M12.2,13.5 L16.8,18.1 M16.8,13.5 L12.2,18.1" stroke="#fff" stroke-width="1.6"/></svg>
<svg style="left:1253px;top:102px" width="22" height="22" viewBox="0 0 22 22"><path d="M0.3,15.2 Q1.5,7 8,3 Q11,0.5 14.5,0.3 L19.5,5.2 Q14,6 11,8 Q7,12 6.2,20.2 Z" fill="#8f8f8f"/><path d="M8.7,17.7 Q12,11 18.5,7.7 L22,11.8 Q17,13 12.8,21 Z" fill="#fff" stroke="#333" stroke-width="1" stroke-linejoin="round"/><path d="M13.7,14.7 L10,11.5" stroke="#222" stroke-width="1.8"/><path d="M8.2,9.7 L12.2,10.4 L9,13.6 Z" fill="#222"/></svg>
<svg style="left:1292px;top:102px" width="22" height="22" viewBox="0 0 22 22"><path d="M0.9,6.4 Q5,3.5 8,3 Q12,1.5 15.5,1 L18,1.8 Q19.5,6 21.3,10.2 L12,17 Q10,14.5 8,16 Q4,10 0.9,6.4 Z" fill="#8f8f8f"/><circle cx="15.9" cy="16" r="5.6" fill="#333" stroke="#fff" stroke-width="1.1"/><path d="M13.6,13.7 L18.2,18.3 M18.2,13.7 L13.6,18.3" stroke="#fff" stroke-width="1.6"/></svg>
<svg style="left:1331px;top:102px" width="22" height="22" viewBox="0 0 22 22"><path d="M1.1,11 L3,10 H18.5 L21.5,13.5 V21 H5.7 L1.1,16.8 Z" fill="#fff" stroke="#333" stroke-width="1.1" stroke-linejoin="round"/><path d="M1.5,10.8 Q6,9.5 9,10 Q13,10.5 16,9 Q19,8.8 21.3,13.5 L5.7,14.3 Z" fill="#8f8f8f"/><path d="M1.1,11 L5.7,14.5 H21.5 M5.7,14.5 V21" fill="none" stroke="#333" stroke-width="1.1"/><path d="M10.1,13.5 V7" stroke="#fff" stroke-width="3.6"/><path d="M10.1,13.5 V7" stroke="#222" stroke-width="1.8"/><path d="M7,8.3 H13.2 L10.1,4 Z" fill="#222"/></svg>
<svg style="left:1370px;top:102px" width="22" height="22" viewBox="0 0 22 22"><path d="M1.2,3.9 Q7,2.5 12.5,1 L16.7,1.2 L20.8,6.8 Q13,6 5,9.3 Z" fill="#8f8f8f"/><path d="M1.25,11.5 L2.5,10.6 H17.5 L20.8,14 V21 H6.7 L1.25,16.8 Z" fill="#fff" stroke="#333" stroke-width="1.1" stroke-linejoin="round"/><path d="M1.25,11.5 L6.7,14 H20.8 M6.7,14 V21" fill="none" stroke="#333" stroke-width="1.1"/></svg>
<svg style="left:1414px;top:102px" width="22" height="22" viewBox="0 0 22 22"><path d="M2,1 L21,4 L21,21 L2,18 Z" fill="#d8d8d8" stroke="#333" stroke-width="1.3" stroke-linejoin="round"/><path d="M11,2.5 L11,12 L21,13" fill="none" stroke="#333" stroke-width="1.3" stroke-linejoin="round"/></svg>
<svg style="left:1442px;top:102px" width="22" height="22" viewBox="0 0 22 22"><path d="M6,9 L11,14 L16,9" fill="none" stroke="#333" stroke-width="2"/></svg>
<svg style="left:1480px;top:102px" width="22" height="22" viewBox="0 0 22 22"><path d="M2,4 L4,1 L13,1 L17,5 L17,9 L11,9 L11,13 L17,17 L17,21 L6,21 L2,17 Z" fill="#d8d8d8" stroke="#333" stroke-width="1.3" stroke-linejoin="round"/><path d="M4,1 L7,4 L15,4 M7,4 L7,19 L17,19" fill="none" stroke="#444" stroke-width="1"/><path d="M7,4 L7,19 L17,19 L17,17 L10,17 L10,6 L7,4Z" fill="#8f8f8f"/></svg>
<svg style="left:1506px;top:102px" width="22" height="22" viewBox="0 0 22 22"><path d="M6,9 L11,14 L16,9" fill="none" stroke="#333" stroke-width="2"/></svg>
<svg style="left:1542px;top:102px" width="22" height="22" viewBox="0 0 22 22"><path d="M1,6 Q1,2 5,2 L10,2 L10,15 L14,19 L14,2 L20,8 L20,20 L7,20 Q1,20 1,15 Z" fill="#d8d8d8" stroke="#333" stroke-width="1.3" stroke-linejoin="round"/><path d="M4,2 L4,17 L14,17" fill="none" stroke="#555" stroke-width="1"/><path d="M4,15 L14,15 L18,19 L6,19Z" fill="#aaa"/></svg>
<svg style="left:1570px;top:102px" width="22" height="22" viewBox="0 0 22 22"><path d="M6,9 L11,14 L16,9" fill="none" stroke="#333" stroke-width="2"/></svg>
<svg style="left:1606px;top:102px" width="22" height="22" viewBox="0 0 22 22"><rect x="1" y="2" width="20" height="20" rx="3" fill="none" stroke="#333" stroke-width="1.5" stroke-dasharray="4,3"/><path d="M11,7 V17 M6,12 H16" stroke="#333" stroke-width="2.2"/></svg>
<div class="sep" style="left:318.2px"></div>
<div class="sep" style="left:419.5px"></div>
<div class="sep" style="left:639.0px"></div>
<div class="sep" style="left:957.0px"></div>
<div class="sep" style="left:1060.3px"></div>
<div class="sep" style="left:1241.2px"></div>
<div class="sep" style="left:1401.3px"></div>
<div class="sep" style="left:1465.5px"></div>
<div class="sep" style="left:1529.5px"></div>
<div class="sep" style="left:1593.5px"></div>

<!-- 3D model -->
<svg width="1800" height="1126" viewBox="0 0 1800 1126" style="left:0;top:0">
<defs>
 <clipPath id="cwL"><polygon points="446.6,343 701.5,417.3 698.3,420 698.5,581.6 446.6,508"/></clipPath>
 <clipPath id="cwR"><polygon points="1495.6,650 1746,720 1746,884.4 1495.6,812.2"/></clipPath>
 <clipPath id="ceL"><ellipse cx="547.9" cy="519.3" rx="26.0" ry="18.9" transform="rotate(48.3 547.9 519.3)"/></clipPath>
 <clipPath id="ceR"><ellipse cx="1647.6" cy="831.3" rx="33.2" ry="25.0" transform="rotate(48.4 1647.6 831.3)"/></clipPath>
</defs>
<g stroke="#1a1a1a" stroke-width="1.1" stroke-linejoin="round">
  <polygon points="446.6,508 599.4,790.1 599.4,817.3 446.6,532.7" fill="#556775"/>
  <polygon points="599.4,790.1 1184,959.4 1184,986.8 599.4,817.3" fill="#556775"/>
  <polygon points="1184,959.4 1752.4,883 1752.4,911 1184,986.8" fill="#738c9f"/>
  <polygon points="446.6,508 698.5,581.6 774.3,722.7 1212.9,849.6 1495.6,812.2 1746,884.4 1752.4,883 1184,959.4 599.4,790.1" fill="#95b7d0"/>
  <polygon points="730.8,467.9 1395.6,659.6 1212.9,685.1 777.2,559.5" fill="#959595"/>
</g>
<g stroke="#111" stroke-width="1.1">
  <polygon points="735.0,487.3 735.9,487.4 736.7,487.5 737.4,487.6 738.3,487.7 739.6,487.9 741.4,488.1 743.9,488.4 746.9,488.8 750.3,489.3 753.8,489.8 757.3,490.3 760.6,490.9 763.5,491.5 766.3,492.1 769.0,492.7 771.8,493.4 774.8,494.2 778.3,495.0 781.4,495.7 784.0,496.3 786.8,496.9 790.7,497.8 796.5,499.4 805.0,501.7 816.8,505.0 831.4,509.2 847.9,514.0 865.4,519.0 883.1,524.1 900.0,529.0 915.7,533.5 930.7,537.9 945.9,542.2 962.0,546.9 979.8,552.0 1000.0,557.8 1022.3,564.2 1045.9,571.0 1071.2,578.2 1098.5,586.0 1128.0,594.5 1160.0,603.6 1195.4,613.7 1234.1,624.7 1275.0,636.4 1317.0,648.4 1359.1,660.3 1400.0,672.0 1400.0,682.0 1359.1,670.4 1317.0,658.4 1275.0,646.5 1234.1,634.8 1195.4,623.8 1160.0,613.8 1128.0,604.7 1098.5,596.4 1071.2,588.7 1045.9,581.5 1022.3,574.8 1000.0,568.4 979.8,562.6 962.0,557.4 945.9,552.6 930.7,548.1 915.7,543.6 900.0,539.0 883.0,534.0 865.3,528.8 847.6,523.6 831.1,518.7 816.6,514.4 805.0,511.0 797.0,508.6 792.0,507.0 789.1,505.9 787.2,505.2 785.4,504.6 782.8,503.9 779.6,503.1 776.6,502.4 773.7,501.8 770.8,501.3 768.0,500.8 765.0,500.3 761.8,499.8 758.4,499.3 755.1,498.8 751.8,498.4 748.8,498.0 746.3,497.7 744.3,497.5 742.8,497.4 741.5,497.4 740.4,497.4 739.3,497.3 738.0,497.3" fill="#3d56a0"/>
  <polyline points="738.1,495.1 739.3,495.1 740.4,495.2 741.5,495.2 742.9,495.2 744.5,495.3 746.5,495.5 749.1,495.8 752.1,496.2 755.4,496.6 758.8,497.1 762.2,497.6 765.4,498.1 768.3,498.6 771.2,499.1 774.1,499.7 777.0,500.3 780.1,500.9 783.4,501.8 786.0,502.5 787.9,503.2 789.8,503.9 792.7,504.9 797.7,506.5 805.6,508.9 817.2,512.3 831.7,516.6 848.3,521.5 865.9,526.7 883.7,531.9 900.6,536.9 916.3,541.5 931.4,546.0 946.6,550.5 962.7,555.3 980.4,560.4 1000.6,566.3 1022.9,572.7 1046.5,579.4 1071.8,586.6 1099.1,594.3 1128.6,602.6 1160.6,611.7 1196.0,621.7 1234.7,632.7 1275.6,644.4 1317.6,656.3 1359.7,668.3 1400.6,679.9" fill="none" stroke-width="0.9"/>
  <polyline points="738.0,497.3 739.3,497.3 740.4,497.4 741.5,497.4 742.8,497.4 744.3,497.5 746.3,497.7 748.8,498.0 751.8,498.4 755.1,498.8 758.4,499.3 761.8,499.8 765.0,500.3 768.0,500.8 770.8,501.3 773.7,501.8 776.6,502.4 779.6,503.1 782.8,503.9 785.4,504.6 787.2,505.2 789.1,505.9 792.0,507.0 797.0,508.6 805.0,511.0 816.6,514.4 831.1,518.7 847.6,523.6 865.3,528.8 883.0,534.0 900.0,539.0 915.7,543.6 930.7,548.1 945.9,552.6 962.0,557.4 979.8,562.6 1000.0,568.4 1022.3,574.8 1045.9,581.5 1071.2,588.7 1098.5,596.4 1128.0,604.7 1160.0,613.8 1195.4,623.8 1234.1,634.8 1275.0,646.5 1317.0,658.4 1359.1,670.4 1400.0,682.0" fill="none" stroke-width="1.8"/>
</g>
<g stroke="#111" stroke-width="1.1">
  <polygon points="544.9,531.2 541.9,533.5 538.9,536.0 536.1,538.7 533.5,541.5 531.0,544.4 528.8,547.5 526.8,550.7 525.0,553.9 523.5,557.3 522.1,560.7 521.1,564.2 520.3,567.8 519.7,571.3 519.4,574.9 519.3,578.4 519.4,582.0 519.8,585.5 520.4,589.0 521.2,592.4 522.2,595.8 523.4,599.1 524.8,602.3 526.3,605.4 527.9,608.5 529.7,611.5 531.5,614.4 533.4,617.3 535.3,620.1 537.3,622.9 539.3,625.7 541.3,628.4 543.3,631.2 545.3,633.9 547.3,636.6 549.2,639.4 551.1,642.1 553.0,644.9 554.9,647.7 556.8,650.5 558.8,653.3 560.7,656.1 562.7,658.8 564.7,661.6 566.8,664.3 568.9,667.0 571.0,669.7 573.1,672.3 575.3,674.9 577.5,677.4 579.7,679.9 582.0,682.4 584.3,684.8 586.6,687.3 588.9,689.6 591.3,692.0 593.7,694.3 596.1,696.6 598.5,698.8 601.0,701.0 603.5,703.2 606.0,705.4 608.5,707.5 611.1,709.6 613.6,711.7 616.2,713.8 618.8,715.8 621.5,717.8 624.1,719.7 626.8,721.7 629.5,723.6 632.1,725.5 634.9,727.4 637.6,729.2 640.3,731.0 643.1,732.8 645.9,734.6 648.7,736.4 651.5,738.1 654.3,739.9 657.1,741.6 660.0,743.2 662.8,744.9 665.7,746.5 668.6,748.2 671.5,749.8 674.4,751.4 677.3,753.0 680.2,754.5 683.1,756.1 686.1,757.6 689.0,759.1 692.0,760.6 694.9,762.1 697.9,763.6 700.9,765.1 703.8,766.6 706.8,768.0 709.8,769.4 712.8,770.9 715.8,772.3 718.8,773.7 721.8,775.1 724.8,776.5 727.8,777.9 730.8,779.3 733.8,780.6 736.8,782.0 739.8,783.4 742.9,784.7 745.9,786.1 748.9,787.4 751.9,788.8 755.0,790.1 758.0,791.4 761.0,792.7 764.1,794.0 767.1,795.3 770.1,796.6 773.2,797.9 776.2,799.2 779.3,800.4 782.3,801.7 785.4,803.0 788.4,804.2 791.5,805.5 794.6,806.7 797.6,807.9 800.7,809.2 803.8,810.4 806.8,811.6 809.9,812.8 813.0,814.0 816.1,815.2 819.1,816.4 822.2,817.5 825.3,818.7 828.4,819.9 831.5,821.0 834.6,822.2 837.7,823.3 840.8,824.4 843.9,825.6 847.0,826.7 850.1,827.8 853.2,828.9 856.3,830.0 859.4,831.1 862.5,832.2 865.6,833.2 868.7,834.3 871.9,835.4 875.0,836.4 878.1,837.5 881.2,838.5 884.4,839.5 887.5,840.5 890.6,841.6 893.8,842.6 896.9,843.6 900.1,844.6 903.2,845.6 906.3,846.5 909.5,847.5 912.6,848.5 915.8,849.4 918.9,850.4 922.1,851.3 925.3,852.3 928.4,853.2 931.6,854.1 934.7,855.0 937.9,855.9 941.1,856.8 944.2,857.7 947.4,858.6 950.6,859.5 953.8,860.4 956.9,861.2 960.1,862.1 963.3,862.9 966.5,863.8 969.7,864.6 972.9,865.4 976.1,866.2 979.2,867.0 982.4,867.8 985.6,868.6 988.8,869.4 992.0,870.2 995.2,871.0 998.4,871.7 1001.6,872.5 1004.8,873.3 1008.0,874.0 1011.3,874.7 1014.5,875.5 1017.7,876.2 1020.9,876.9 1024.1,877.6 1027.3,878.3 1030.5,879.0 1033.8,879.7 1037.0,880.3 1040.2,881.0 1043.4,881.7 1046.7,882.3 1049.9,883.0 1053.1,883.6 1056.3,884.2 1059.6,884.9 1062.8,885.5 1066.0,886.1 1069.3,886.7 1072.5,887.3 1075.7,887.9 1079.0,888.4 1082.2,889.0 1085.5,889.6 1088.7,890.1 1092.0,890.7 1095.2,891.2 1098.5,891.8 1101.7,892.3 1105.0,892.8 1108.2,893.3 1111.5,893.8 1114.7,894.3 1118.0,894.8 1121.2,895.3 1124.5,895.8 1127.7,896.2 1131.0,896.7 1134.3,897.1 1137.5,897.6 1140.8,898.0 1144.0,898.4 1147.3,898.9 1150.6,899.3 1153.8,899.7 1157.1,900.1 1160.4,900.5 1163.6,900.9 1166.9,901.2 1170.2,901.6 1173.5,902.0 1176.7,902.3 1180.0,902.7 1183.3,903.0 1186.6,903.3 1189.8,903.6 1193.1,904.0 1196.4,904.3 1199.7,904.6 1202.9,904.9 1206.2,905.1 1209.5,905.4 1212.8,905.7 1216.1,906.0 1219.3,906.2 1222.6,906.5 1225.9,906.7 1229.2,906.9 1232.5,907.2 1235.8,907.4 1239.1,907.6 1242.3,907.8 1245.6,908.0 1248.9,908.2 1252.2,908.3 1255.5,908.5 1258.8,908.7 1262.1,908.8 1265.4,909.0 1268.7,909.1 1271.9,909.3 1275.2,909.4 1278.5,909.5 1281.8,909.6 1285.1,909.7 1288.4,909.8 1291.7,909.9 1295.0,910.0 1298.3,910.1 1301.6,910.1 1304.9,910.2 1308.2,910.2 1311.5,910.3 1314.8,910.3 1318.0,910.3 1321.3,910.4 1324.6,910.4 1327.9,910.4 1331.2,910.4 1334.5,910.4 1337.8,910.4 1341.1,910.3 1344.4,910.3 1347.7,910.3 1351.0,910.2 1354.3,910.2 1357.6,910.1 1360.9,910.1 1364.2,910.0 1367.5,909.9 1370.8,909.8 1374.1,909.7 1377.4,909.6 1380.7,909.5 1384.0,909.4 1387.3,909.3 1390.5,909.2 1393.8,909.0 1397.1,908.9 1400.4,908.7 1403.7,908.6 1407.0,908.4 1410.3,908.2 1413.6,908.0 1416.9,907.9 1420.2,907.7 1423.5,907.5 1426.7,907.3 1430.0,907.1 1433.3,906.9 1436.6,906.7 1439.9,906.5 1443.2,906.3 1446.5,906.1 1449.7,905.9 1453.0,905.7 1456.3,905.5 1459.6,905.3 1462.9,905.1 1466.1,904.9 1469.4,904.7 1472.7,904.5 1476.0,904.3 1479.3,904.1 1482.5,903.9 1485.8,903.7 1489.1,903.5 1492.4,903.3 1495.7,903.2 1499.0,903.0 1502.3,902.8 1505.5,902.6 1508.8,902.4 1512.1,902.2 1515.4,902.0 1518.7,901.7 1522.0,901.5 1525.3,901.2 1528.6,900.9 1531.9,900.6 1535.2,900.3 1538.5,900.0 1541.8,899.6 1545.0,899.2 1548.3,898.8 1551.6,898.3 1554.9,897.8 1558.1,897.3 1561.4,896.7 1564.7,896.1 1567.9,895.5 1571.2,894.8 1574.5,894.1 1577.7,893.3 1581.0,892.5 1584.2,891.6 1587.4,890.7 1590.7,889.8 1593.9,888.7 1597.1,887.7 1600.3,886.5 1603.5,885.4 1606.6,884.1 1609.8,882.8 1612.9,881.5 1616.1,880.1 1619.1,878.7 1622.2,877.2 1625.3,875.6 1628.3,874.1 1631.3,872.4 1634.2,870.7 1637.2,869.0 1640.1,867.2 1642.9,865.4 1645.8,863.5 1648.5,861.6 1651.3,859.6 1654.0,857.6 1656.7,855.5 1659.3,853.4 1661.9,851.2 1664.4,849.0 1666.9,846.8 1669.2,844.5 1660.8,835.8 1658.6,838.0 1656.3,840.1 1654.0,842.2 1651.6,844.3 1649.2,846.3 1646.8,848.2 1644.3,850.2 1641.7,852.1 1639.1,853.9 1636.5,855.7 1633.9,857.5 1631.2,859.2 1628.4,860.9 1625.6,862.5 1622.8,864.1 1620.0,865.7 1617.2,867.2 1614.3,868.6 1611.4,870.0 1608.4,871.4 1605.5,872.7 1602.5,874.0 1599.5,875.2 1596.5,876.4 1593.5,877.5 1590.5,878.6 1587.4,879.6 1584.4,880.5 1581.3,881.5 1578.2,882.3 1575.2,883.2 1572.1,883.9 1569.0,884.7 1565.8,885.4 1562.7,886.0 1559.6,886.6 1556.4,887.2 1553.3,887.8 1550.1,888.3 1546.9,888.8 1543.7,889.2 1540.5,889.6 1537.3,890.0 1534.1,890.4 1530.9,890.7 1527.7,891.1 1524.5,891.4 1521.2,891.6 1518.0,891.9 1514.7,892.1 1511.5,892.4 1508.2,892.6 1504.9,892.8 1501.7,893.0 1498.4,893.2 1495.1,893.4 1491.9,893.6 1488.6,893.7 1485.3,893.9 1482.0,894.1 1478.7,894.3 1475.4,894.5 1472.1,894.7 1468.8,894.9 1465.5,895.1 1462.3,895.3 1459.0,895.5 1455.7,895.7 1452.4,895.9 1449.1,896.1 1445.8,896.3 1442.6,896.5 1439.3,896.7 1436.0,896.9 1432.7,897.1 1429.4,897.3 1426.2,897.5 1422.9,897.7 1419.6,897.9 1416.3,898.1 1413.0,898.3 1409.8,898.4 1406.5,898.6 1403.2,898.8 1400.0,899.0 1396.7,899.1 1393.4,899.3 1390.1,899.4 1386.9,899.6 1383.6,899.7 1380.3,899.8 1377.0,899.9 1373.8,900.0 1370.5,900.1 1367.2,900.2 1364.0,900.3 1360.7,900.4 1357.4,900.5 1354.1,900.5 1350.9,900.6 1347.6,900.6 1344.3,900.7 1341.0,900.7 1337.8,900.7 1334.5,900.8 1331.2,900.8 1327.9,900.8 1324.7,900.7 1321.4,900.7 1318.1,900.7 1314.9,900.7 1311.6,900.6 1308.3,900.6 1305.0,900.5 1301.8,900.4 1298.5,900.4 1295.2,900.3 1292.0,900.2 1288.7,900.1 1285.4,900.0 1282.1,899.9 1278.9,899.8 1275.6,899.7 1272.3,899.5 1269.1,899.4 1265.8,899.2 1262.5,899.1 1259.3,898.9 1256.0,898.7 1252.7,898.6 1249.5,898.4 1246.2,898.2 1242.9,898.0 1239.7,897.8 1236.4,897.6 1233.2,897.3 1229.9,897.1 1226.6,896.9 1223.4,896.6 1220.1,896.4 1216.9,896.1 1213.6,895.8 1210.3,895.6 1207.1,895.3 1203.8,895.0 1200.6,894.7 1197.3,894.4 1194.1,894.1 1190.8,893.7 1187.6,893.4 1184.3,893.1 1181.1,892.7 1177.8,892.4 1174.6,892.0 1171.3,891.7 1168.1,891.3 1164.8,890.9 1161.6,890.5 1158.3,890.1 1155.1,889.7 1151.8,889.3 1148.6,888.9 1145.4,888.5 1142.1,888.0 1138.9,887.6 1135.6,887.1 1132.4,886.7 1129.2,886.2 1125.9,885.7 1122.7,885.3 1119.5,884.8 1116.2,884.3 1113.0,883.8 1109.8,883.3 1106.6,882.8 1103.3,882.2 1100.1,881.7 1096.9,881.2 1093.7,880.6 1090.4,880.1 1087.2,879.5 1084.0,878.9 1080.8,878.4 1077.6,877.8 1074.4,877.2 1071.1,876.6 1067.9,876.0 1064.7,875.4 1061.5,874.8 1058.3,874.1 1055.1,873.5 1051.9,872.9 1048.7,872.2 1045.5,871.6 1042.3,870.9 1039.1,870.2 1035.9,869.5 1032.7,868.9 1029.5,868.2 1026.3,867.5 1023.1,866.8 1019.9,866.0 1016.8,865.3 1013.6,864.6 1010.4,863.9 1007.2,863.1 1004.0,862.4 1000.9,861.6 997.7,860.8 994.5,860.1 991.3,859.3 988.2,858.5 985.0,857.7 981.8,856.9 978.7,856.1 975.5,855.2 972.3,854.4 969.2,853.6 966.0,852.7 962.9,851.9 959.7,851.0 956.6,850.2 953.4,849.3 950.3,848.4 947.1,847.5 944.0,846.7 940.8,845.8 937.7,844.8 934.5,843.9 931.4,843.0 928.3,842.1 925.1,841.1 922.0,840.2 918.9,839.2 915.8,838.3 912.6,837.3 909.5,836.4 906.4,835.4 903.3,834.4 900.2,833.4 897.1,832.4 893.9,831.4 890.8,830.4 887.7,829.3 884.6,828.3 881.5,827.3 878.4,826.2 875.3,825.2 872.2,824.1 869.1,823.0 866.1,822.0 863.0,820.9 859.9,819.8 856.8,818.7 853.7,817.6 850.6,816.5 847.6,815.4 844.5,814.3 841.4,813.1 838.3,812.0 835.3,810.8 832.2,809.7 829.1,808.5 826.1,807.4 823.0,806.2 820.0,805.0 816.9,803.8 813.9,802.6 810.8,801.4 807.8,800.2 804.7,799.0 801.7,797.8 798.7,796.6 795.6,795.3 792.6,794.1 789.6,792.8 786.5,791.6 783.5,790.3 780.5,789.0 777.5,787.8 774.4,786.5 771.4,785.2 768.4,783.9 765.4,782.6 762.4,781.3 759.4,780.0 756.4,778.6 753.4,777.3 750.4,776.0 747.4,774.6 744.4,773.3 741.4,771.9 738.4,770.6 735.4,769.2 732.5,767.8 729.5,766.4 726.5,765.0 723.5,763.6 720.6,762.2 717.6,760.8 714.6,759.4 711.7,758.0 708.8,756.5 705.8,755.1 702.9,753.6 700.0,752.1 697.1,750.6 694.2,749.1 691.3,747.6 688.4,746.1 685.5,744.6 682.7,743.0 679.8,741.5 677.0,739.9 674.2,738.3 671.4,736.7 668.6,735.0 665.8,733.4 663.0,731.7 660.3,730.1 657.5,728.4 654.8,726.6 652.1,724.9 649.4,723.2 646.8,721.4 644.1,719.6 641.5,717.8 638.9,715.9 636.3,714.1 633.7,712.2 631.1,710.3 628.6,708.4 626.1,706.4 623.6,704.5 621.1,702.5 618.6,700.5 616.2,698.4 613.8,696.3 611.4,694.2 609.0,692.1 606.7,690.0 604.4,687.8 602.1,685.6 599.8,683.4 597.6,681.1 595.4,678.8 593.2,676.5 591.0,674.1 588.9,671.7 586.8,669.3 584.7,666.9 582.7,664.4 580.7,661.9 578.7,659.4 576.7,656.8 574.8,654.2 572.9,651.5 571.0,648.8 569.1,646.1 567.2,643.4 565.3,640.6 563.4,637.8 561.4,635.0 559.5,632.2 557.5,629.3 555.5,626.5 553.4,623.8 551.4,621.0 549.4,618.3 547.5,615.6 545.7,613.0 543.9,610.3 542.2,607.7 540.6,605.0 539.1,602.4 537.8,599.7 536.6,597.1 535.5,594.5 534.6,591.8 533.9,589.2 533.3,586.5 532.9,583.8 532.6,581.1 532.5,578.3 532.6,575.6 532.8,572.9 533.2,570.2 533.8,567.5 534.5,564.8 535.4,562.2 536.6,559.6 537.9,557.0 539.4,554.4 541.0,551.9 542.9,549.5 544.9,547.1 547.1,544.9 549.4,542.7 552.1,540.6" fill="#3d56a0"/>
  <polyline points="544.9,531.2 541.9,533.5 538.9,536.0 536.1,538.7 533.5,541.5 531.0,544.4 528.8,547.5 526.8,550.7 525.0,553.9 523.5,557.3 522.1,560.7 521.1,564.2 520.3,567.8 519.7,571.3 519.4,574.9 519.3,578.4 519.4,582.0 519.8,585.5 520.4,589.0 521.2,592.4 522.2,595.8 523.4,599.1 524.8,602.3 526.3,605.4 527.9,608.5 529.7,611.5 531.5,614.4 533.4,617.3 535.3,620.1 537.3,622.9 539.3,625.7 541.3,628.4 543.3,631.2 545.3,633.9 547.3,636.6 549.2,639.4 551.1,642.1 553.0,644.9 554.9,647.7 556.8,650.5 558.8,653.3 560.7,656.1 562.7,658.8 564.7,661.6 566.8,664.3 568.9,667.0 571.0,669.7 573.1,672.3 575.3,674.9 577.5,677.4 579.7,679.9 582.0,682.4 584.3,684.8 586.6,687.3 588.9,689.6 591.3,692.0 593.7,694.3 596.1,696.6 598.5,698.8 601.0,701.0 603.5,703.2 606.0,705.4 608.5,707.5 611.1,709.6 613.6,711.7 616.2,713.8 618.8,715.8 621.5,717.8 624.1,719.7 626.8,721.7 629.5,723.6 632.1,725.5 634.9,727.4 637.6,729.2 640.3,731.0 643.1,732.8 645.9,734.6 648.7,736.4 651.5,738.1 654.3,739.9 657.1,741.6 660.0,743.2 662.8,744.9 665.7,746.5 668.6,748.2 671.5,749.8 674.4,751.4 677.3,753.0 680.2,754.5 683.1,756.1 686.1,757.6 689.0,759.1 692.0,760.6 694.9,762.1 697.9,763.6 700.9,765.1 703.8,766.6 706.8,768.0 709.8,769.4 712.8,770.9 715.8,772.3 718.8,773.7 721.8,775.1 724.8,776.5 727.8,777.9 730.8,779.3 733.8,780.6 736.8,782.0 739.8,783.4 742.9,784.7 745.9,786.1 748.9,787.4 751.9,788.8 755.0,790.1 758.0,791.4 761.0,792.7 764.1,794.0 767.1,795.3 770.1,796.6 773.2,797.9 776.2,799.2 779.3,800.4 782.3,801.7 785.4,803.0 788.4,804.2 791.5,805.5 794.6,806.7 797.6,807.9 800.7,809.2 803.8,810.4 806.8,811.6 809.9,812.8 813.0,814.0 816.1,815.2 819.1,816.4 822.2,817.5 825.3,818.7 828.4,819.9 831.5,821.0 834.6,822.2 837.7,823.3 840.8,824.4 843.9,825.6 847.0,826.7 850.1,827.8 853.2,828.9 856.3,830.0 859.4,831.1 862.5,832.2 865.6,833.2 868.7,834.3 871.9,835.4 875.0,836.4 878.1,837.5 881.2,838.5 884.4,839.5 887.5,840.5 890.6,841.6 893.8,842.6 896.9,843.6 900.1,844.6 903.2,845.6 906.3,846.5 909.5,847.5 912.6,848.5 915.8,849.4 918.9,850.4 922.1,851.3 925.3,852.3 928.4,853.2 931.6,854.1 934.7,855.0 937.9,855.9 941.1,856.8 944.2,857.7 947.4,858.6 950.6,859.5 953.8,860.4 956.9,861.2 960.1,862.1 963.3,862.9 966.5,863.8 969.7,864.6 972.9,865.4 976.1,866.2 979.2,867.0 982.4,867.8 985.6,868.6 988.8,869.4 992.0,870.2 995.2,871.0 998.4,871.7 1001.6,872.5 1004.8,873.3 1008.0,874.0 1011.3,874.7 1014.5,875.5 1017.7,876.2 1020.9,876.9 1024.1,877.6 1027.3,878.3 1030.5,879.0 1033.8,879.7 1037.0,880.3 1040.2,881.0 1043.4,881.7 1046.7,882.3 1049.9,883.0 1053.1,883.6 1056.3,884.2 1059.6,884.9 1062.8,885.5 1066.0,886.1 1069.3,886.7 1072.5,887.3 1075.7,887.9 1079.0,888.4 1082.2,889.0 1085.5,889.6 1088.7,890.1 1092.0,890.7 1095.2,891.2 1098.5,891.8 1101.7,892.3 1105.0,892.8 1108.2,893.3 1111.5,893.8 1114.7,894.3 1118.0,894.8 1121.2,895.3 1124.5,895.8 1127.7,896.2 1131.0,896.7 1134.3,897.1 1137.5,897.6 1140.8,898.0 1144.0,898.4 1147.3,898.9 1150.6,899.3 1153.8,899.7 1157.1,900.1 1160.4,900.5 1163.6,900.9 1166.9,901.2 1170.2,901.6 1173.5,902.0 1176.7,902.3 1180.0,902.7 1183.3,903.0 1186.6,903.3 1189.8,903.6 1193.1,904.0 1196.4,904.3 1199.7,904.6 1202.9,904.9 1206.2,905.1 1209.5,905.4 1212.8,905.7 1216.1,906.0 1219.3,906.2 1222.6,906.5 1225.9,906.7 1229.2,906.9 1232.5,907.2 1235.8,907.4 1239.1,907.6 1242.3,907.8 1245.6,908.0 1248.9,908.2 1252.2,908.3 1255.5,908.5 1258.8,908.7 1262.1,908.8 1265.4,909.0 1268.7,909.1 1271.9,909.3 1275.2,909.4 1278.5,909.5 1281.8,909.6 1285.1,909.7 1288.4,909.8 1291.7,909.9 1295.0,910.0 1298.3,910.1 1301.6,910.1 1304.9,910.2 1308.2,910.2 1311.5,910.3 1314.8,910.3 1318.0,910.3 1321.3,910.4 1324.6,910.4 1327.9,910.4 1331.2,910.4 1334.5,910.4 1337.8,910.4 1341.1,910.3 1344.4,910.3 1347.7,910.3 1351.0,910.2 1354.3,910.2 1357.6,910.1 1360.9,910.1 1364.2,910.0 1367.5,909.9 1370.8,909.8 1374.1,909.7 1377.4,909.6 1380.7,909.5 1384.0,909.4 1387.3,909.3 1390.5,909.2 1393.8,909.0 1397.1,908.9 1400.4,908.7 1403.7,908.6 1407.0,908.4 1410.3,908.2 1413.6,908.0 1416.9,907.9 1420.2,907.7 1423.5,907.5 1426.7,907.3 1430.0,907.1 1433.3,906.9 1436.6,906.7 1439.9,906.5 1443.2,906.3 1446.5,906.1 1449.7,905.9 1453.0,905.7 1456.3,905.5 1459.6,905.3 1462.9,905.1 1466.1,904.9 1469.4,904.7 1472.7,904.5 1476.0,904.3 1479.3,904.1 1482.5,903.9 1485.8,903.7 1489.1,903.5 1492.4,903.3 1495.7,903.2 1499.0,903.0 1502.3,902.8 1505.5,902.6 1508.8,902.4 1512.1,902.2 1515.4,902.0 1518.7,901.7 1522.0,901.5 1525.3,901.2 1528.6,900.9 1531.9,900.6 1535.2,900.3 1538.5,900.0 1541.8,899.6 1545.0,899.2 1548.3,898.8 1551.6,898.3 1554.9,897.8 1558.1,897.3 1561.4,896.7 1564.7,896.1 1567.9,895.5 1571.2,894.8 1574.5,894.1 1577.7,893.3 1581.0,892.5 1584.2,891.6 1587.4,890.7 1590.7,889.8 1593.9,888.7 1597.1,887.7 1600.3,886.5 1603.5,885.4 1606.6,884.1 1609.8,882.8 1612.9,881.5 1616.1,880.1 1619.1,878.7 1622.2,877.2 1625.3,875.6 1628.3,874.1 1631.3,872.4 1634.2,870.7 1637.2,869.0 1640.1,867.2 1642.9,865.4 1645.8,863.5 1648.5,861.6 1651.3,859.6 1654.0,857.6 1656.7,855.5 1659.3,853.4 1661.9,851.2 1664.4,849.0 1666.9,846.8 1669.2,844.5" fill="none" stroke-width="1.7"/>
  <polyline points="526.8,601.3 528.3,604.4 529.9,607.4 531.6,610.3 533.4,613.2 535.3,616.0 537.2,618.8 539.2,621.6 541.2,624.3 543.2,627.1 545.2,629.8 547.2,632.5 549.1,635.3 551.1,638.0 553.0,640.8 554.9,643.6 556.8,646.4 558.7,649.2 560.7,652.0 562.6,654.7 564.6,657.5 566.6,660.2 568.6,662.9 570.7,665.6 572.8,668.2 574.9,670.8 577.1,673.4 579.2,675.9 581.5,678.4 583.7,680.8 586.0,683.3 588.3,685.7 590.6,688.0 592.9,690.3 595.3,692.6 597.7,694.9 600.1,697.1 602.5,699.3 605.0,701.5 607.5,703.6 610.0,705.8 612.5,707.8 615.1,709.9 617.6,711.9 620.2,713.9 622.8,715.9 625.5,717.9 628.1,719.8 630.8,721.7 633.5,723.6 636.2,725.5 638.9,727.3 641.6,729.1 644.4,730.9 647.1,732.7 649.9,734.4 652.7,736.2 655.5,737.9 658.3,739.6 661.1,741.3 664.0,742.9 666.8,744.5 669.7,746.2 672.6,747.8 675.5,749.4 678.4,750.9 681.3,752.5 684.2,754.0 687.1,755.6 690.1,757.1 693.0,758.6 696.0,760.1 698.9,761.6 701.9,763.0 704.8,764.5 707.8,765.9 710.8,767.4 713.8,768.8 716.8,770.2 719.8,771.6 722.8,773.0 725.8,774.4 728.8,775.8 731.8,777.2 734.8,778.6 737.8,779.9 740.8,781.3 743.8,782.6 746.8,784.0 749.8,785.3 752.9,786.6 755.9,788.0 758.9,789.3 761.9,790.6 765.0,791.9 768.0,793.2 771.0,794.5 774.1,795.8 777.1,797.1 780.2,798.3 783.2,799.6 786.3,800.8 789.3,802.1 792.4,803.3 795.4,804.6 798.5,805.8 801.5,807.0 804.6,808.2 807.7,809.4 810.7,810.6 813.8,811.8 816.9,813.0 820.0,814.2 823.0,815.4 826.1,816.5 829.2,817.7 832.3,818.9 835.4,820.0 838.5,821.1 841.6,822.3 844.6,823.4 847.7,824.5 850.8,825.6 853.9,826.7 857.0,827.8 860.2,828.9 863.3,830.0 866.4,831.1 869.5,832.1 872.6,833.2 875.7,834.2 878.8,835.3 882.0,836.3 885.1,837.3 888.2,838.4 891.3,839.4 894.5,840.4 897.6,841.4 900.7,842.4 903.9,843.4 907.0,844.3 910.2,845.3 913.3,846.3 916.5,847.2 919.6,848.2 922.8,849.1 925.9,850.1 929.1,851.0 932.2,851.9 935.4,852.8 938.5,853.7 941.7,854.6 944.9,855.5 948.0,856.4 951.2,857.3 954.4,858.1 957.5,859.0 960.7,859.9 963.9,860.7 967.1,861.5 970.3,862.4 973.4,863.2 976.6,864.0 979.8,864.8 983.0,865.6 986.2,866.4 989.4,867.2 992.6,868.0 995.8,868.7 999.0,869.5 1002.2,870.3 1005.4,871.0 1008.6,871.8 1011.8,872.5 1015.0,873.2 1018.2,873.9 1021.4,874.6 1024.6,875.4 1027.8,876.0 1031.0,876.7 1034.2,877.4 1037.4,878.1 1040.7,878.8 1043.9,879.4 1047.1,880.1 1050.3,880.7 1053.6,881.4 1056.8,882.0 1060.0,882.6 1063.2,883.2 1066.5,883.8 1069.7,884.4 1072.9,885.0 1076.2,885.6 1079.4,886.2 1082.6,886.8 1085.9,887.3 1089.1,887.9 1092.3,888.4 1095.6,889.0 1098.8,889.5 1102.1,890.0 1105.3,890.5 1108.6,891.0 1111.8,891.5 1115.1,892.0 1118.3,892.5 1121.6,893.0 1124.8,893.5 1128.1,893.9 1131.3,894.4 1134.6,894.9 1137.8,895.3 1141.1,895.7 1144.3,896.2 1147.6,896.6 1150.9,897.0 1154.1,897.4 1157.4,897.8 1160.6,898.2 1163.9,898.6 1167.2,898.9 1170.4,899.3 1173.7,899.7 1177.0,900.0 1180.2,900.4 1183.5,900.7 1186.8,901.0 1190.1,901.4 1193.3,901.7 1196.6,902.0 1199.9,902.3 1203.1,902.6 1206.4,902.9 1209.7,903.1 1213.0,903.4 1216.2,903.7 1219.5,903.9 1222.8,904.2 1226.1,904.4 1229.4,904.6 1232.6,904.9 1235.9,905.1 1239.2,905.3 1242.5,905.5 1245.8,905.7 1249.0,905.9 1252.3,906.0 1255.6,906.2 1258.9,906.4 1262.2,906.5 1265.5,906.7 1268.7,906.8 1272.0,907.0 1275.3,907.1 1278.6,907.2 1281.9,907.3 1285.2,907.4 1288.5,907.5 1291.8,907.6 1295.0,907.7 1298.3,907.8 1301.6,907.8 1304.9,907.9 1308.2,907.9 1311.5,908.0 1314.8,908.0 1318.1,908.0 1321.4,908.1 1324.6,908.1 1327.9,908.1 1331.2,908.1 1334.5,908.1 1337.8,908.1 1341.1,908.0 1344.4,908.0 1347.7,908.0 1351.0,907.9 1354.3,907.9 1357.5,907.8 1360.8,907.8 1364.1,907.7 1367.4,907.6 1370.7,907.5 1374.0,907.4 1377.3,907.3 1380.6,907.2 1383.9,907.1 1387.2,907.0 1390.5,906.9 1393.7,906.7 1397.0,906.6 1400.3,906.4 1403.6,906.3 1406.9,906.1 1410.2,905.9 1413.5,905.7 1416.8,905.6 1420.0,905.4 1423.3,905.2 1426.6,905.0 1429.9,904.8 1433.2,904.6 1436.5,904.4 1439.7,904.2 1443.0,904.0 1446.3,903.8 1449.6,903.6 1452.9,903.4 1456.2,903.2 1459.4,903.0 1462.7,902.8 1466.0,902.6 1469.3,902.4 1472.6,902.2 1475.8,902.0 1479.1,901.8 1482.4,901.6 1485.7,901.4 1489.0,901.2 1492.3,901.1 1495.6,900.9 1498.8,900.7 1502.1,900.5 1505.4,900.3 1508.7,900.1 1512.0,899.9 1515.3,899.7 1518.6,899.4 1521.8,899.2 1525.1,898.9 1528.4,898.6 1531.7,898.3 1534.9,898.0 1538.2,897.7 1541.5,897.3 1544.7,896.9 1548.0,896.5 1551.3,896.0 1554.5,895.5 1557.8,895.0 1561.0,894.5 1564.3,893.9 1567.5,893.2 1570.7,892.6 1573.9,891.8 1577.2,891.1 1580.4,890.3 1583.6,889.4 1586.8,888.5 1590.0,887.6 1593.2,886.6 1596.3,885.5 1599.5,884.4 1602.7,883.2 1605.8,882.0 1608.9,880.7 1612.0,879.4 1615.1,878.0 1618.2,876.6 1621.2,875.1 1624.2,873.6 1627.2,872.0 1630.2,870.4 1633.1,868.7 1636.0,867.0 1638.8,865.3 1641.7,863.4 1644.5,861.6 1647.2,859.7 1649.9,857.7 1652.6,855.7 1655.2,853.7 1657.8,851.6 1660.4,849.5 1662.9,847.3 1665.3,845.1 1667.6,842.9" fill="none" stroke-width="1.1"/>
  <polyline points="550.6,538.7 547.9,540.9 545.4,543.1 543.1,545.5 541.0,548.0 539.1,550.5 537.3,553.1 535.8,555.8 534.4,558.5 533.2,561.3 532.2,564.1 531.4,566.9 530.8,569.8 530.4,572.6 530.2,575.5 530.1,578.3 530.2,581.2 530.5,584.1 530.9,586.9 531.6,589.7 532.3,592.5 533.3,595.3 534.4,598.0 535.6,600.7" fill="none" stroke-width="0.9"/>
</g>
<g stroke="#1a1a1a" stroke-width="1.1" stroke-linejoin="round">
  <polygon points="446.6,343 701.5,417.3 698.3,420 698.5,581.6 446.6,508" fill="#777777"/>
  <polygon points="698.3,420 701.5,417.3 778.4,558.5 774.3,560.5 774.3,722.7 698.5,581.6" fill="#777777"/>
  <polygon points="774.3,560.5 777.2,559.5 1212.9,681.5 1212.9,849.6 774.3,722.7" fill="#777777"/>
  <polygon points="1212.9,685.1 1495.6,647.1 1495.6,812.2 1212.9,849.6" fill="#a0a0a0"/>
  <polygon points="1495.6,650 1746,720 1746,884.4 1495.6,812.2" fill="#777777"/>
  <polygon points="1746,718 1752.4,720.4 1752.4,883 1746,884.4" fill="#a0a0a0"/>
</g>
<path d="M447.3,344 V508" stroke="#222" stroke-width="2.2"/>
<g fill="#dcdcdc" stroke="#1a1a1a" stroke-width="0.95">
  <polygon points="446.6,343 701.5,417.3 698.6,420.3 447.8,346.6"/>
  <polygon points="701.2,418 777.6,558.8 774.6,560.5 698.8,421.5"/>
  <polygon points="777.2,558.9 1212.9,683.3 1212.9,686.5 774.3,561.7"/>
  <polygon points="1212.9,683.5 1495.6,645.8 1495.6,649 1212.9,686.7"/>
  <polygon points="1495.6,645.8 1752.4,719.8 1746,721 1495.6,649"/>
</g>
<!-- holes -->
<g clip-path="url(#cwL)">
  <ellipse cx="547.9" cy="519.3" rx="26.0" ry="18.9" transform="rotate(48.3 547.9 519.3)" fill="#959595" stroke="#111" stroke-width="1.1"/>
  <g clip-path="url(#ceL)">
    <path d="M527.5,503 Q523,518 534.5,533" fill="none" stroke="#fff" stroke-width="2.2"/>
    <polygon points="538,536 555,524 572,513 574,527 556,539" fill="#3d56a0" stroke="#111" stroke-width="1"/>
    <polyline points="556,536 572,524.5" fill="none" stroke="#111" stroke-width="1"/>
  </g>
  <ellipse cx="547.9" cy="519.3" rx="26.0" ry="18.9" transform="rotate(48.3 547.9 519.3)" fill="none" stroke="#111" stroke-width="1.1"/>
</g>
<g clip-path="url(#cwR)">
  <ellipse cx="1647.6" cy="831.3" rx="33.2" ry="25.0" transform="rotate(48.4 1647.6 831.3)" fill="#959595" stroke="#111" stroke-width="1.1"/>
  <g clip-path="url(#ceR)">
    <path d="M1620.5,812 Q1617,832 1632.5,851" fill="none" stroke="#fff" stroke-width="2.4"/>
    <path d="M1638,856 Q1654,838 1667,812 L1684,786 L1702,804 L1676,832.6 L1655.7,856 Z" fill="#3d56a0" stroke="#111" stroke-width="1"/>
    <path d="M1652.5,855 L1678,828" fill="none" stroke="#111" stroke-width="1"/>
  </g>
  <ellipse cx="1647.6" cy="831.3" rx="33.2" ry="25.0" transform="rotate(48.4 1647.6 831.3)" fill="none" stroke="#111" stroke-width="1.1"/>
</g>

<!-- origin gizmo -->
<defs>
 <mask id="mBase"><rect x="0" y="0" width="1800" height="1126" fill="#fff"/>
   <polygon points="446.6,508 599.4,790.1 1184,959.4 1184,986.8 599.4,817.3 446.6,532.7" fill="#000"/><polygon points="446.6,508 599.4,790.1 1184,959.4 1400,930 1000,700 698.5,581.6" fill="#000"/></mask>
</defs>
<g mask="url(#mBase)" stroke="#7c9bd3" stroke-width="1.1" stroke-opacity="0.8">
  <polygon points="659.1,825.5 689.3,799.7 689.3,853.9 659.1,879.7" fill="#dfe7f3" fill-opacity="0.3"/>
  <polygon points="631.5,845 686.65,860.2 716.85,834.4 661.75,819.2" fill="#dfe7f3" fill-opacity="0.3"/>
</g>
<path d="M689.3,799.7 L673.8,812.9" stroke="#7c9bd3" stroke-width="1.1" stroke-opacity="0.8"/>
<g stroke="#7c9bd3" stroke-width="1.1" stroke-opacity="0.8">
  <polygon points="646.6,805.1 701.7,820.2 701.7,874.4 646.6,858.4" fill="#e8eef7" fill-opacity="0.22"/>
</g>
<text x="0" y="0" font-family="Liberation Sans" font-size="9.5" fill="#4a72d0" transform="translate(648,814.5) skewY(16)">Front</text>
<text x="0" y="0" font-family="Liberation Sans" font-size="7.5" fill="#4f78d0" fill-opacity="0.75" transform="translate(659.5,832.5) skewY(-48)">Right</text>
<circle cx="674.2" cy="839.7" r="4.2" fill="#fff" stroke="#111" stroke-width="1.8"/>
<circle cx="674.2" cy="839.7" r="1.6" fill="#111"/>
</svg>


</body></html>
